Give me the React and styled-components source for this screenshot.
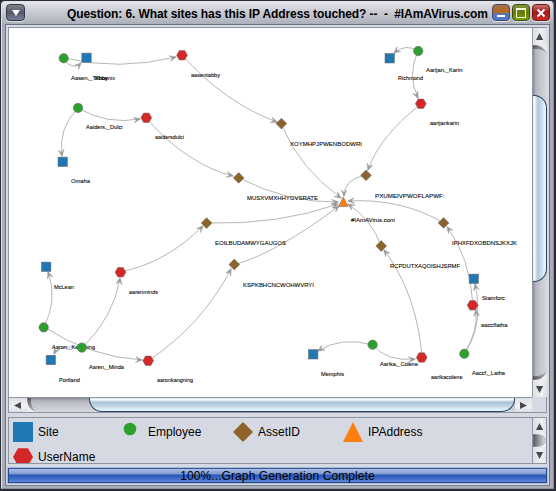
import React from "react";
import styled, { createGlobalStyle, css } from "styled-components";

const Global = createGlobalStyle`
  * { box-sizing: border-box; }
  body { margin: 0; overflow: hidden; background: #252a38; }
`;

const Window = styled.div`
  width: 556px;
  height: 491px;
  padding: 1px 2px 2px 1px;
  background: #292b38;
  font: 12px "Liberation Sans", Arial, sans-serif;
  color: #000;
`;

const Frame = styled.div`
  height: 488px;
  display: flex;
  flex-direction: column;
  border: 1px solid #e1e2e8;
  border-right-color: #868b98;
  border-bottom-color: #8e94a0;
  border-radius: 4px 4px 0 0;
  background: #a9adb8;
`;

const TitleBar = styled.header`
  flex: none;
  height: 22px;
  display: flex;
  align-items: center;
  padding: 0 3px 1px 4px;
  border-radius: 3px 3px 0 0;
  background: linear-gradient(#e7e5ec, #cfd0d7 35%, #b1b5be 90%, #a9aeb9);
`;

const Title = styled.h1`
  flex: 1;
  display: flex;
  margin: 0;
  padding-left: 42px;
  font-size: 12px;
  line-height: 20px;
  white-space: pre;
`;

const tones = {
  menu: "linear-gradient(#7f838e, #515866 50%, #707b90 90%)",
  minimize: "linear-gradient(#9a7350, #bd6818 48%, #5276bd 60%, #4c77d2)",
  maximize: "linear-gradient(#829343, #627b08 50%, #7b9f0e)",
  close: "linear-gradient(#c57870, #a71b18 45%, #c62c21)",
};

const borders = { menu: "#343945", minimize: "#4c4c66", maximize: "#39500f", close: "#701713" };

const TitleButton = styled.button`
  width: ${(p) => (p.$tone === "menu" ? 19 : 18)}px;
  height: 17px;
  display: grid;
  place-items: center;
  padding: 0;
  border: 1px solid ${(p) => borders[p.$tone]};
  border-radius: 4px;
  background: ${(p) => tones[p.$tone]};
  box-shadow: 0 1px 0 #e0e1e6;
  svg { display: block; }
`;

const Controls = styled.div`
  display: flex;
  gap: 2px;
`;

const Content = styled.main`
  flex: 1;
  margin: 0 3px 2px;
  padding: 2px 2px 1px;
  display: flex;
  flex-direction: column;
  border: 1px solid #6b7283;
  border-bottom-color: #777e8d;
  background: #d6d9e1;
`;

const panel = css`
  flex: none;
  border: 1px solid #8e94a1;
  background: #d6d9e1;
`;

const ScrollPane = styled.section`
  ${panel}
  height: 386px;
  display: grid;
  grid-template: 369px 15px / 523px 15px;
`;

const GraphView = styled.svg`
  display: block;
  width: 523px;
  height: 369px;
  background: #fff;
  font-family: "Liberation Sans", Arial, sans-serif;
  font-size: 5.6px;
`;

const ScrollBar = styled.div`
  display: flex;
  flex-direction: ${(p) => (p.$vertical ? "column" : "row")};
  overflow: hidden;
  border: 0 solid #8f97a5;
  border-width: ${(p) => (p.$vertical ? "0 0 0 1px" : "1px 0 0 0")};
  background: linear-gradient(
    ${(p) => (p.$vertical ? "to right" : "to bottom")},
    #898a92, #b4b5bd 20%, #c6c8d0 55%, #d5d7df
  );
`;

const Arrow = styled.div`
  flex: none;
  width: ${(p) => (p.$vertical ? 14 : 17)}px;
  height: ${(p) => (p.$vertical ? 16 : 14)}px;
  display: grid;
  place-items: center;
  background: linear-gradient(${(p) => (p.$vertical ? "to right" : "to bottom")}, #dfe0e4, #f0f0f2 60%, #dddfe5);
  svg { display: block; }
`;

const Track = styled.div`
  flex: ${(p) => (p.$size ? `0 0 ${p.$size}px` : "1")};
  svg { display: block; }
`;

const Thumb = styled.div`
  flex: 0 0 ${(p) => p.$size}px;
  border: 1px solid #294560;
  ${(p) =>
    p.$vertical
      ? css`
          border-left: 0;
          border-radius: 0 13px 13px 0;
          background: linear-gradient(to right, #d8e8f2, #f6fafc 12%, #b0c9dc 36%, #bdd5e6 55%, #e4f3fb 90%);
        `
      : css`
          border-top: 0;
          border-radius: 0 0 13px 13px;
          background: linear-gradient(#d8e8f2, #f6fafc 12%, #aac4d6 34%, #bcd2e3 58%, #e1f1f9 90%);
        `}
`;

const Legend = styled.section`
  ${panel}
  height: 47px;
  margin-top: 4px;
  display: grid;
  grid-template-columns: 523px 15px;
  overflow: hidden;
`;

const LegendItems = styled.div`
  height: 45px;
  padding: 4px 0 0 4px;
  display: grid;
  grid-template-columns: repeat(4, 110px);
  grid-auto-rows: 20px;
  row-gap: 5px;
  overflow: hidden;
`;

const LegendItem = styled.div`
  display: flex;
  align-items: center;
  gap: 5px;
  line-height: 20px;
  svg { display: block; flex: none; }
`;

const Progress = styled.div`
  flex: none;
  height: 17px;
  margin: 3px -1px 0;
  border: 2px solid;
  border-color: #34589b #294b86 #294b86 #24499b;
  outline: 1px solid #a8b9d5;
  outline-offset: -1px;
  text-align: center;
  font-size: 12px;
  line-height: 14px;
  letter-spacing: 0.1px;
  background: linear-gradient(#acbde3, #7e9bd3 38%, #2857b5 46%, #3e67c4 70%, #5d88dd);
`;

const COLORS = {
  site: "#1f77b4",
  employee: "#2ca02c",
  asset: "#8c632b",
  ip: "#ff7f0e",
  user: "#d62728",
};

const hexPoints = (x, y, r) =>
  [[-1, 0], [-0.5, -0.87], [0.5, -0.87], [1, 0], [0.5, 0.87], [-0.5, 0.87]]
    .map(([a, b]) => `${x + a * r},${y + b * r}`)
    .join(" ");

function Shape({ kind, x, y, r }) {
  const paint = { fill: COLORS[kind], stroke: r < 6 ? "#706b68" : "none", strokeWidth: 0.55 };
  if (kind === "site") return <rect x={x - r} y={y - r} width={r * 2} height={r * 2} {...paint} />;
  if (kind === "employee") return <circle cx={x} cy={y} r={r} {...paint} />;
  if (kind === "user") return <polygon points={hexPoints(x, y, r)} {...paint} />;
  if (kind === "asset")
    return <polygon points={`${x},${y - r} ${x + r},${y} ${x},${y + r} ${x - r},${y}`} {...paint} />;
  return <polygon points={`${x},${y - r} ${x + r},${y + r} ${x - r},${y + r}`} {...paint} />;
}

// kind, x, y, label, label left edge, label middle, label width
const nodes = [
  ["employee", 63.7, 58.3, "Aasen,_Tabby", 71, 78, 37],
  ["site", 86.5, 57.8, "Phoenix", 95, 78, 20],
  ["user", 182, 55.3, "aasentabby", 191, 75, 29],
  ["site", 389.7, 58.3, "Richmond", 398, 78, 25],
  ["employee", 418.2, 51, "Aarijan,_Karin", 426, 70, 36.5],
  ["user", 420.8, 103.7, "aarijankarin", 430, 123, 29],
  ["asset", 281.4, 123.6, "XOYMHPJPWENBODWRI", 290, 144, 72],
  ["asset", 366, 175.3, "PXUMEIVPWOFLAPWF:", 375, 196, 69.5],
  ["employee", 78, 107.9, "Aaiders,_Dulci", 86, 127, 36.5],
  ["user", 146.3, 117.8, "aaidersdulci", 155, 137, 29],
  ["site", 62.7, 161.8, "Omaha", 71, 181, 19],
  ["asset", 238.7, 177.9, "MUSXVMXHHYGVSRATE", 247, 198, 71],
  ["asset", 206.6, 223.1, "EOILBUDAMWYGAUGOS", 215, 243, 71],
  ["asset", 443.6, 222.9, "IPHXFDXOBDNSJKXJK", 452, 243, 65],
  ["asset", 381.2, 246, "RCPDUTXAQOISHJSRMF", 390, 266, 70],
  ["asset", 234.3, 264.5, "KSPKBHCNCWOHWVRYI", 243, 285, 71],
  ["ip", 343.3, 201.8, "#IAmAVirus.com", 351, 220, 44],
  ["site", 46.2, 266.8, "McLean", 54, 287, 20],
  ["user", 120.5, 272.2, "aarenminds", 129, 292, 29],
  ["employee", 43.7, 327.4, "Aaron,_Kangning", 52, 347, 43],
  ["employee", 81.8, 347.6, "Aaren,_Minda", 89, 367, 35],
  ["site", 50.8, 360, "Portland", 59, 380, 21],
  ["user", 148.2, 360.7, "aaronkangning", 157, 380, 36],
  ["site", 313.2, 354.3, "Memphis", 321, 374, 23],
  ["employee", 372.6, 344.7, "Aarika,_Colene", 380, 364, 38],
  ["user", 421.7, 357.5, "aarikacolene", 431, 377, 31.5],
  ["employee", 464.3, 353.8, "Aaccf,_Latha", 472, 373, 33],
  ["site", 473.8, 278.8, "Stamforc", 482, 298, 23],
  ["user", 472.6, 305.3, "aaccflatha", 481, 325, 26.5],
];

const edges = [
  "M63 59Q73 71 81 63",
  "M64 58Q119 71 176 57",
  "M182 55Q225 103 277 122",
  "M281 124Q300 169 341 198",
  "M418 51Q406 43 394 53",
  "M418 51Q407 75 418 98",
  "M421 104Q379 137 368 170",
  "M366 175Q344 179 344 196",
  "M78 108Q58 128 62 156",
  "M78 108Q107 125 140 119",
  "M146 118Q188 165 233 176",
  "M239 178Q288 203 338 202",
  "M207 223Q279 225 338 204",
  "M120 272Q166 263 203 226",
  "M234 265Q278 252 339 206",
  "M148 361Q202 325 231 269",
  "M44 327Q58 299 48 272",
  "M44 327Q90 357 142 360",
  "M82 348Q114 317 120 278",
  "M82 348Q59 344 54 354",
  "M381 246Q373 221 348 204",
  "M422 357Q417 294 384 250",
  "M444 223Q401 198 348 201",
  "M473 305Q470 257 447 227",
  "M464 354Q484 326 475 284",
  "M464 354Q478 332 476 310",
  "M373 345Q341 336 318 351",
  "M373 345Q387 362 415 359",
];

const ends = { up: "3.5,0 7.2,7 0,7", down: "0,0 7.2,0 3.5,7", left: "0,3.5 7,0 7,7", right: "0,0 7,3.5 0,7" };

function ScrollArrow({ dir, vertical }) {
  return (
    <Arrow $vertical={vertical}>
      <svg width="8" height="7"><polygon points={ends[dir]} fill="#484a51" /></svg>
    </Arrow>
  );
}

// The curved lip where an arrow button meets the recessed track.
function Lip({ dir }) {
  const turn = {
    up: "",
    down: "translate(0 10) scale(1 -1)",
    left: "matrix(0 1 1 0 0 0)",
  }[dir];
  const tall = dir !== "left";
  return (
    <svg width={tall ? 14 : 10} height={tall ? 10 : 14}>
      <defs>
        <linearGradient id={`lip-${dir}`} x2="1">
          <stop stopColor="#4b4b51" /><stop offset=".65" stopColor="#888991" /><stop offset="1" stopColor="#b9bac2" />
        </linearGradient>
      </defs>
      <g transform={turn}>
        <path d="M0 0H14V10Q11 1 0 1Z" fill="#ececef" />
        <path d="M0 1Q11 1 14 10Q9 4 0 5Z" fill={`url(#lip-${dir})`} opacity=".85" />
      </g>
    </svg>
  );
}

function Graph() {
  return (
    <GraphView viewBox="9 28 523 369">
      <defs>
        <marker id="tip" markerUnits="userSpaceOnUse" markerWidth="9" markerHeight="8" refX="6.5" refY="3.5" orient="auto">
          <path d="M0 .5L7 3.5L0 6.5L3 3.5Z" fill="#999" stroke="#999" strokeWidth=".4" />
        </marker>
      </defs>
      {edges.map((d) => (
        <path key={d} d={d} fill="none" stroke="#a9a9a9" strokeWidth=".85" markerEnd="url(#tip)" />
      ))}
      {nodes.map(([, , , label, x, y, width]) => (
        <text key={label} x={x} y={y + 2.2} textLength={width} lengthAdjust="spacingAndGlyphs" stroke="#000" strokeWidth=".08">
          {label}
        </text>
      ))}
      {nodes.map(([kind, x, y, label]) => (
        <Shape key={label} kind={kind} x={x} y={y} r={{ user: 5.4, asset: 5.4, ip: 4.8 }[kind] || 4.7} />
      ))}
    </GraphView>
  );
}

const legend = [
  ["site", "Site"],
  ["employee", "Employee"],
  ["asset", "AssetID"],
  ["ip", "IPAddress"],
  ["user", "UserName"],
];

export default function App() {
  return (
    <>
      <Global />
      <Window>
        <Frame>
          <TitleBar>
            <TitleButton $tone="menu" aria-label="Window menu">
              <svg width="8" height="6"><path d="M0 0H8L4 6Z" fill="#fff" /></svg>
            </TitleButton>
            <Title>
              <svg width="424" height="20">
                <text x="0" y="15" textLength="421" fontWeight="bold" xmlSpace="preserve">
                  {"Question: 6. What sites has this IP Address touched? --\u00a0 -\u00a0 #IAmAVirus.com"}
                </text>
              </svg>
            </Title>
            <Controls>
              <TitleButton $tone="minimize" aria-label="Minimize">
                <svg width="12" height="12"><path d="M2 8H10V10H2Z" fill="#fff" /></svg>
              </TitleButton>
              <TitleButton $tone="maximize" aria-label="Maximize">
                <svg width="12" height="12"><path d="M1.5 2H10.5V10.5H1.5Z" fill="none" stroke="#f4f7dc" /><path d="M1 2H11" stroke="#f4f7dc" strokeWidth="2" /></svg>
              </TitleButton>
              <TitleButton $tone="close" aria-label="Close">
                <svg width="12" height="12"><path d="M2.5 2.5L9.5 9.5M9.5 2.5L2.5 9.5" stroke="#fff" strokeWidth="2" /></svg>
              </TitleButton>
            </Controls>
          </TitleBar>
          <Content>
            <ScrollPane>
              <Graph />
              <ScrollBar $vertical>
                <ScrollArrow dir="up" vertical />
                <Track $size={51}><Lip dir="up" /></Track>
                <Thumb $vertical $size={187} />
                <Track />
                <Track $size={10}><Lip dir="down" /></Track>
                <ScrollArrow dir="down" vertical />
              </ScrollBar>
              <ScrollBar>
                <ScrollArrow dir="left" />
                <Track $size={63}><Lip dir="left" /></Track>
                <Thumb $size={426} />
                <ScrollArrow dir="right" />
              </ScrollBar>
            </ScrollPane>
            <Legend>
              <LegendItems>
                {legend.map(([kind, name]) => (
                  <LegendItem key={name}>
                    <svg width="20" height="20">
                      <Shape kind={kind} x={kind === "employee" ? 7 : 10} y={kind === "employee" ? 7 : 10} r={kind === "employee" ? 6.3 : 10} />
                    </svg>
                    {name}
                  </LegendItem>
                ))}
              </LegendItems>
              <ScrollBar $vertical>
                <ScrollArrow dir="up" vertical />
                <Track>
                  <svg width="14" height="13">
                    <defs><linearGradient id="notch" x2="1"><stop stopColor="#55565c" /><stop offset="1" stopColor="#e5e6e9" /></linearGradient></defs>
                    <path d="M0 0H14V13H0Z" fill="#ececef" />
                    <path d="M0 0Q11 0 13 6.5Q11 13 0 13Z" fill="url(#notch)" stroke="#94959b" strokeWidth=".6" />
                  </svg>
                </Track>
                <ScrollArrow dir="down" vertical />
              </ScrollBar>
            </Legend>
            <Progress>100%...Graph Generation Complete</Progress>
          </Content>
        </Frame>
      </Window>
    </>
  );
}
